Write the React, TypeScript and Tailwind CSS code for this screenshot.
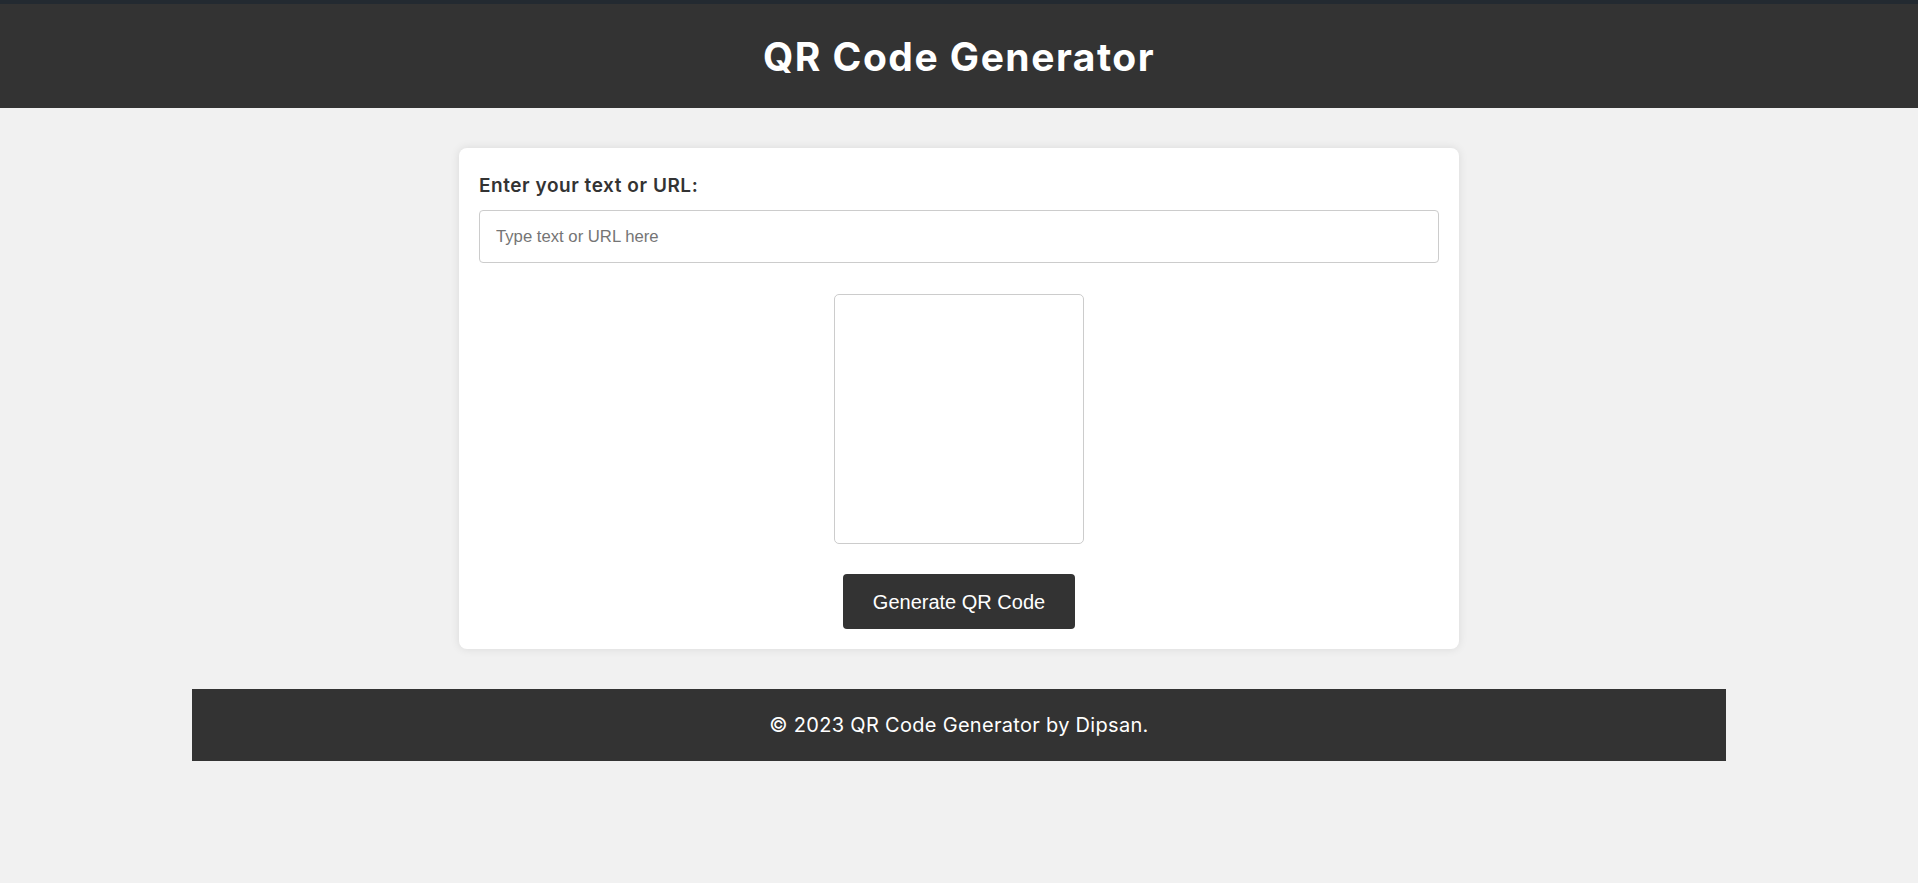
import React from "react";

export default function App() {
  return (
    <div className="min-h-[883px] bg-[#f1f1f1]" style={{ fontFamily: "Inter, 'Open Sans', sans-serif" }}>
      <div className="h-[4px] bg-[#232a31]" />
      <header className="h-[104px] bg-[#333333] flex items-center justify-center">
        <h1 className="text-white font-bold text-[39px] leading-none tracking-[1.5px] font-['Inter',sans-serif]">
          QR Code Generator
        </h1>
      </header>

      <main className="mx-auto mt-10 w-[1000px] rounded-lg bg-white px-5 pt-5 pb-[20px] shadow-[0_0_10px_rgba(0,0,0,0.1)]">
        <label className="block h-[36px] mb-[6px] text-[19px] leading-[36px] tracking-[0.55px] font-semibold text-[#333333] font-['Inter',sans-serif]">
          Enter your text or URL:
        </label>
        <input
          type="text"
          placeholder="Type text or URL here"
          className="block w-full h-[53px] rounded-[4px] border border-[#cccccc] px-4 text-[16.7px] text-[#333] placeholder:text-[#757575] outline-none font-['Liberation_Sans',Arial,sans-serif]"
        />
        <div className="mx-auto mt-[31px] h-[250px] w-[250px] rounded-[5px] border border-[#cccccc] bg-white" />
        <div className="mt-[30px] flex justify-center">
          <button className="h-[55px] w-[232px] rounded-[4px] bg-[#333333] text-[20px] text-white font-['Liberation_Sans',Arial,sans-serif]">
            Generate QR Code
          </button>
        </div>
      </main>

      <footer className="mx-auto mt-[40px] flex h-[72px] w-[80%] items-center justify-center bg-[#333333]">
        <p className="text-white text-[20px] tracking-[0.3px] font-['Inter',sans-serif]">© 2023 QR Code Generator by Dipsan.</p>
      </footer>
    </div>
  );
}
